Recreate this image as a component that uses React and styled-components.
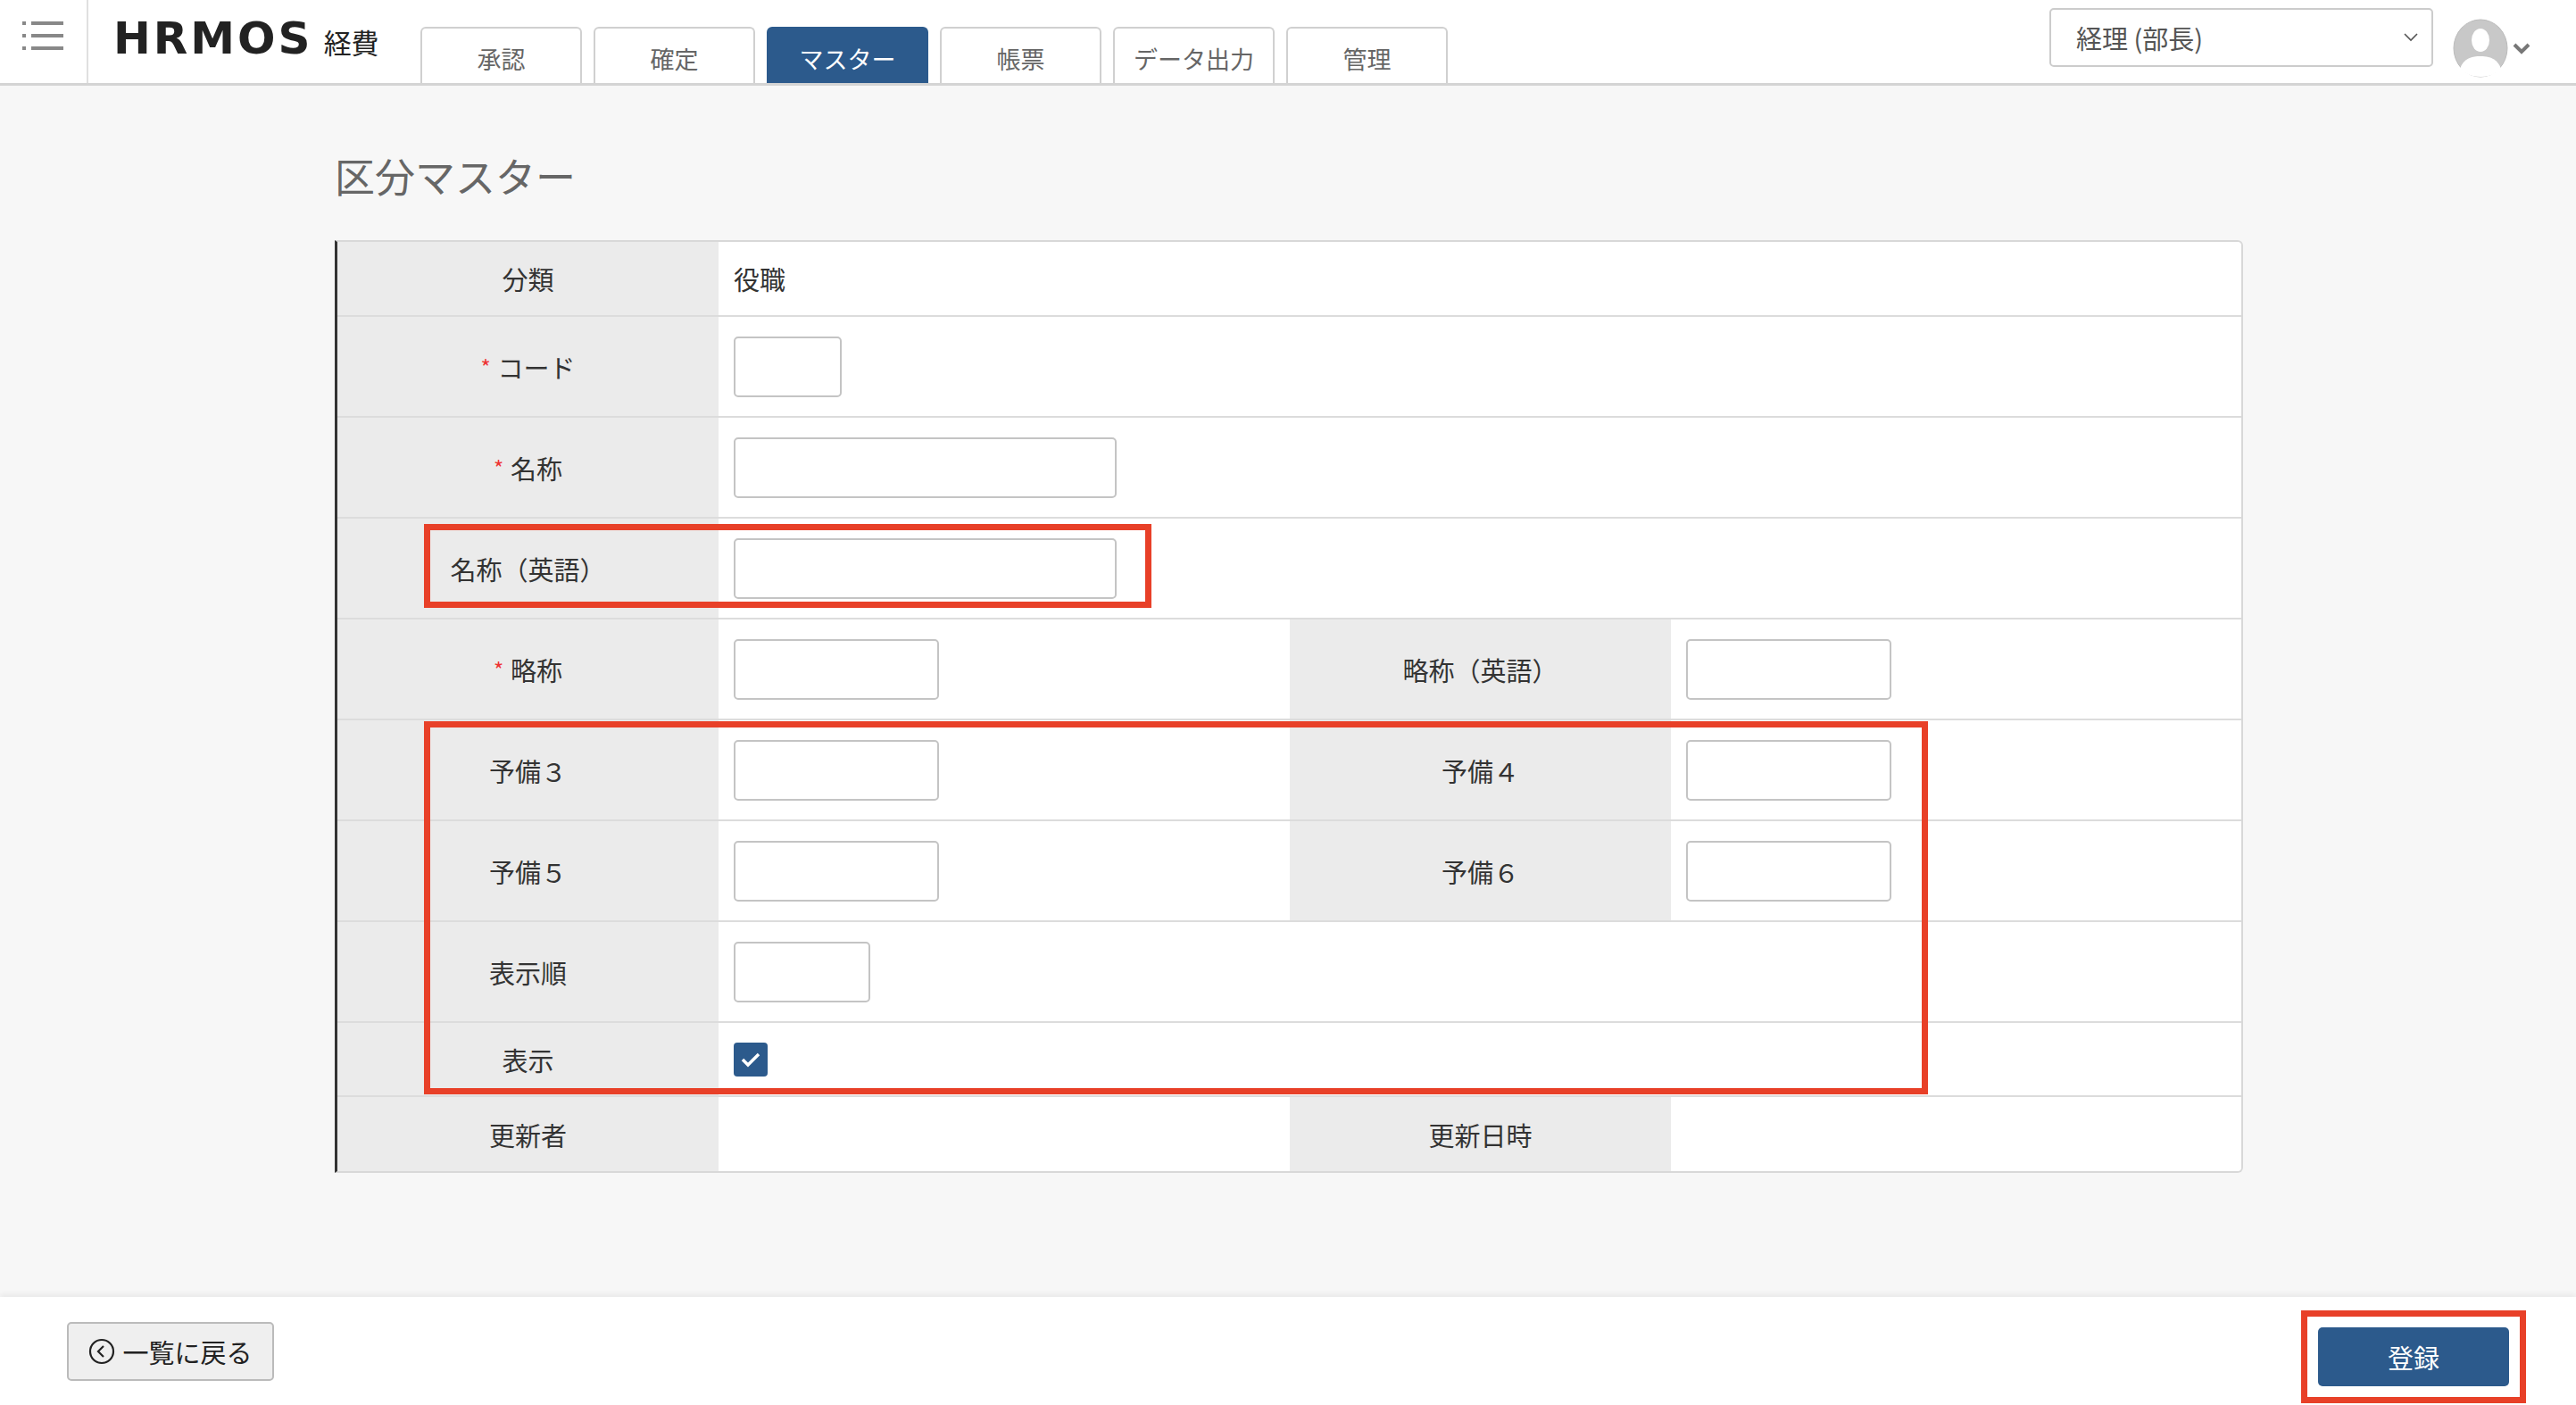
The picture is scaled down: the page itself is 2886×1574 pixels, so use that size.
import React from "react";
import styled, { createGlobalStyle } from "styled-components";

const Global = createGlobalStyle`
  html, body { margin: 0; padding: 0; }
  body { font-family: "Noto Sans CJK JP", "Noto Sans", sans-serif; color: #333; background: #f7f7f7; }
  * { box-sizing: border-box; }
`;

const Page = styled.div`
  display: flex;
  flex-direction: column;
  min-height: 100vh;
`;

const Header = styled.header`
  height: 96px;
  background: #fff;
  border-bottom: 3px solid #d4d4d4;
  display: flex;
  align-items: stretch;
`;

const MenuCell = styled.div`
  width: 99px;
  border-right: 2px solid #e0e0e0;
  display: flex;
  align-items: center;
  justify-content: center;
  padding-bottom: 14px;
`;

const Logo = styled.div`
  display: flex;
  align-items: baseline;
  gap: 12px;
  padding: 8px 0 0 28px;
  width: 372px;
  height: 80px;
  align-self: flex-start;
  margin-top: 6px;
  span:first-child {
    font-family: "DejaVu Sans", sans-serif;
    font-weight: 700;
    font-size: 50px;
    letter-spacing: 3px;
    color: #222;
  }
  span:last-child { font-size: 31px; color: #222; }
`;

const Tabs = styled.nav`
  display: flex;
  gap: 13px;
  align-items: flex-end;
`;

const Tab = styled.div`
  width: 181px;
  height: 63px;
  border: 2px solid #d0d0d0;
  border-bottom: none;
  border-radius: 6px 6px 0 0;
  display: flex;
  align-items: center;
  justify-content: center;
  font-size: 27px;
  padding-top: 6px;
  background: ${p => (p.active ? "#2c5a8c" : "#fff")};
  border-color: ${p => (p.active ? "#2c5a8c" : "#d0d0d0")};
  color: ${p => (p.active ? "#fff" : "#666")};
`;

const HeaderRight = styled.div`
  margin-left: auto;
  display: flex;
  align-items: flex-start;
  padding: 9px 50px 0 0;
  gap: 22px;
`;

const RoleSelect = styled.div`
  width: 430px;
  height: 66px;
  border: 2px solid #ccc;
  border-radius: 5px;
  display: flex;
  align-items: center;
  justify-content: space-between;
  padding: 0 14px 0 28px;
  font-size: 29px;
  color: #555;
`;

const Avatar = styled.div`
  display: flex;
  align-items: center;
  gap: 4px;
  margin-top: 12px;
`;

const Main = styled.main`
  flex: 1;
  padding: 68px 0 0 375px;
`;

const Title = styled.h1`
  margin: 0 0 40px;
  font-size: 45px;
  font-weight: 400;
  color: #666;
`;

const TableWrap = styled.div`
  position: relative;
  width: 2138px;
`;

const Table = styled.div`
  background: #fff;
  border: 2px solid #d8d8d8;
  border-left: 3px solid #333;
  border-radius: 0 6px 6px 0;
  overflow: hidden;
`;

const Row = styled.div`
  display: grid;
  grid-template-columns: 427px 640px 427px 1fr;
  height: ${p => p.h}px;
  border-top: ${p => (p.first ? "none" : "2px solid #dcdcdc")};
`;

const Label = styled.div`
  background: #ebebeb;
  display: flex;
  align-items: center;
  justify-content: center;
  font-size: 29px;
  color: #333;
`;

const Value = styled.div`
  display: flex;
  align-items: center;
  padding-left: 17px;
  font-size: 29px;
  grid-column: ${p => (p.span ? "span 3" : "auto")};
`;

const Req = styled.span`
  color: #e33;
  font-size: 24px;
  margin-right: 8px;
`;

const Input = styled.div`
  width: ${p => p.w}px;
  height: 68px;
  border: 2px solid #c4c4c4;
  border-radius: 5px;
  background: #fff;
`;

const Check = styled.div`
  width: 38px;
  height: 38px;
  border-radius: 4px;
  background: #2c5a8c;
  display: flex;
  align-items: center;
  justify-content: center;
`;

const Mark = styled.div`
  position: absolute;
  border: 7px solid #e84028;
  pointer-events: none;
`;

const Footer = styled.footer`
  height: 121px;
  background: #fff;
  box-shadow: 0 -4px 6px rgba(0, 0, 0, 0.05);
  display: flex;
  align-items: center;
  justify-content: space-between;
  padding: 0 74px 0 75px;
`;

const BackBtn = styled.div`
  width: 232px;
  height: 66px;
  border: 2px solid #bbb;
  border-radius: 5px;
  background: #efefef;
  display: flex;
  align-items: center;
  justify-content: center;
  gap: 8px;
  font-size: 29px;
  color: #222;
`;

const SaveWrap = styled.div`
  border: 7px solid #e84028;
  padding: 12px;
  margin-top: 12px;
  margin-right: -18px;
`;

const SaveBtn = styled.div`
  width: 214px;
  height: 66px;
  border-radius: 5px;
  background: #2c5a8c;
  color: #fff;
  display: flex;
  align-items: center;
  justify-content: center;
  font-size: 29px;
`;

const rows = [
  { h: 82, cells: [["分類"], ["役職", "text", 0, true]] },
  { h: 113, cells: [["コード", "req"], [null, "input", 121, true]] },
  { h: 113, cells: [["名称", "req"], [null, "input", 429, true]] },
  { h: 113, cells: [["名称（英語）"], [null, "input", 429, true]] },
  { h: 113, cells: [["略称", "req"], [null, "input", 230], ["略称（英語）"], [null, "input", 230]] },
  { h: 113, cells: [["予備３"], [null, "input", 230], ["予備４"], [null, "input", 230]] },
  { h: 113, cells: [["予備５"], [null, "input", 230], ["予備６"], [null, "input", 230]] },
  { h: 113, cells: [["表示順"], [null, "input", 153, true]] },
  { h: 83, cells: [["表示"], [null, "check", 0, true]] },
  { h: 85, cells: [["更新者"], [null, "text"], ["更新日時"], [null, "text"]] },
];

export default function App() {
  return (
    <Page>
      <Global />
      <Header>
        <MenuCell>
          <svg width="48" height="40" viewBox="0 0 48 40">
            {[6, 20, 34].map(y => (
              <g key={y} fill="#888">
                <rect x="0" y={y - 2} width="4" height="4" />
                <rect x="10" y={y - 2} width="36" height="4" />
              </g>
            ))}
          </svg>
        </MenuCell>
        <Logo>
          <span>HRMOS</span>
          <span>経費</span>
        </Logo>
        <Tabs>
          {["承認", "確定", "マスター", "帳票", "データ出力", "管理"].map(t => (
            <Tab key={t} active={t === "マスター"}>{t}</Tab>
          ))}
        </Tabs>
        <HeaderRight>
          <RoleSelect>
            <span>経理 (部長)</span>
            <svg width="18" height="12" viewBox="0 0 18 12">
              <path d="M2 2l7 7 7-7" fill="none" stroke="#555" strokeWidth="1.6" />
            </svg>
          </RoleSelect>
          <Avatar>
            <svg width="62" height="66" viewBox="0 0 62 66">
              <ellipse cx="31" cy="33" rx="30" ry="32" fill="#c8c8c8" stroke="#bbb" />
              <ellipse cx="31" cy="24" rx="10" ry="13" fill="#fff" />
              <path d="M8 56c4-12 14-14 23-14s19 2 23 14c-6 6-14 9-23 9s-17-3-23-9z" fill="#fff" />
            </svg>
            <svg width="22" height="16" viewBox="0 0 22 16">
              <path d="M3 4l8 8 8-8" fill="none" stroke="#777" strokeWidth="4" />
            </svg>
          </Avatar>
        </HeaderRight>
      </Header>
      <Main>
        <Title>区分マスター</Title>
        <TableWrap>
          <Table>
            {rows.map((r, i) => (
              <Row key={i} h={r.h} first={i === 0}>
                {r.cells.map((c, j) =>
                  j % 2 === 0 ? (
                    <Label key={j}>
                      {c[1] === "req" && <Req>*</Req>}
                      {c[0]}
                    </Label>
                  ) : (
                    <Value key={j} span={c[3]}>
                      {c[1] === "text" && c[0]}
                      {c[1] === "input" && <Input w={c[2]} />}
                      {c[1] === "check" && (
                        <Check>
                          <svg width="24" height="20" viewBox="0 0 24 20">
                            <path d="M3 10l6 6L21 4" fill="none" stroke="#fff" strokeWidth="3.5" />
                          </svg>
                        </Check>
                      )}
                    </Value>
                  )
                )}
              </Row>
            ))}
          </Table>
          <Mark style={{ left: 100, top: 318, width: 815, height: 94 }} />
          <Mark style={{ left: 100, top: 539, width: 1685, height: 418 }} />
        </TableWrap>
      </Main>
      <Footer>
        <BackBtn>
          <svg width="30" height="30" viewBox="0 0 30 30">
            <circle cx="15" cy="15" r="13" fill="none" stroke="#222" strokeWidth="2.2" />
            <path d="M17 9l-6 6 6 6" fill="none" stroke="#222" strokeWidth="2.2" />
          </svg>
          一覧に戻る
        </BackBtn>
        <SaveWrap>
          <SaveBtn>登録</SaveBtn>
        </SaveWrap>
      </Footer>
    </Page>
  );
}
